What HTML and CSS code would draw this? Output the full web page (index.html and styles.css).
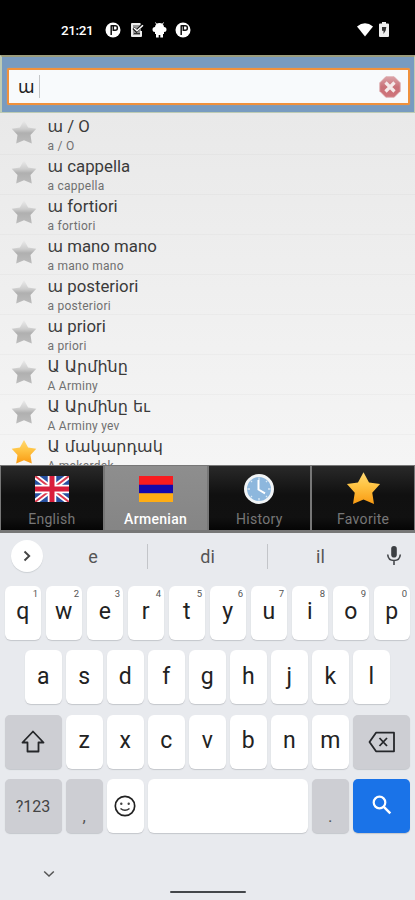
FILE: index.html
```html
<!DOCTYPE html>
<html lang="en">
<head>
<meta charset="utf-8">
<title>Dictionary</title>
<link rel="stylesheet" href="styles.css">
</head>
<body>
<svg class="defs" width="0" height="0" aria-hidden="true">
  <defs>
    <linearGradient id="silver" x1="0" y1="0" x2="0" y2="1"><stop offset="0" stop-color="#ececec"/><stop offset=".38" stop-color="#cdcdcd"/><stop offset=".55" stop-color="#b0b0b0"/><stop offset="1" stop-color="#bcbcbc"/></linearGradient>
    <linearGradient id="gold" x1="0" y1="0" x2="0" y2="1"><stop offset="0" stop-color="#ffd873"/><stop offset=".4" stop-color="#ffc545"/><stop offset="1" stop-color="#f99a12"/></linearGradient>
    <linearGradient id="clear" x1="0" y1="0" x2="0" y2="1"><stop offset="0" stop-color="#dba3a8"/><stop offset=".5" stop-color="#c97178"/><stop offset="1" stop-color="#cf747b"/></linearGradient>
    <symbol id="star" viewBox="0 0 26 26"><path d="M13 1l4.100 7.500 8.200 1.200-5.800 6.400 1.300 8.500L13 21.200l-7.800 3.400 1.300-8.500L.7 9.700l8.200-1.200z"/></symbol>
    <symbol id="pnote" viewBox="0 0 16 16"><circle cx="8" cy="8" r="7.500" fill="#fff"/><path d="M6.200 3.300V13M8.300 3.500v5.500M6.200 3.700h4q2.200 0 2.200 2.200T10.200 8.200H8.300" fill="none" stroke="#111" stroke-width="1.500"/></symbol>
  </defs>
</svg>
<div class="screen">
  <header class="status">
    <span class="time">21:21</span>
    <svg class="s1" width="16" height="16"><use href="#pnote"/></svg>
    <svg class="s2" width="14" height="16" viewBox="0 0 14 16"><path d="M10.500 2H2v12h9V9" fill="#999" stroke="#eee" stroke-width="2" stroke-linejoin="round"/><path d="M3.500 6l3 3L12.500 3" fill="none" stroke="#111" stroke-width="3"/><path d="M4 6l3 2.700L13 3.200" fill="none" stroke="#fff" stroke-width="1.500"/><path d="M4 11.500h6" stroke="#333"/></svg>
    <svg class="s3" width="15" height="16" viewBox="0 0 15 16"><path d="M4.500 2L3.500.500M10.500 2l1-1.500" stroke="#fff"/><path d="M3 5q.5-4 4.500-4T12 5q2.500 0 2.500 2.500T12 10v2h-1v3.500H8.300V13H6.700v2.500H4V12H3v-2Q.5 10 .5 7.500T3 5z" fill="#fff"/></svg>
    <svg class="s4" width="16" height="16"><use href="#pnote"/></svg>
    <svg class="wifi" width="16" height="14" viewBox="0 0 16 14"><path d="M0 3.500Q8-2.800 16 3.500L8 13.500z" fill="#fff"/></svg>
    <svg class="battery" width="10" height="15" viewBox="0 0 10 15"><path d="M3 0h4v1.500h2q1 0 1 1V14q0 1-1 1H1q-1 0-1-1V2.500q0-1 1-1h2z" fill="#eee"/><path d="M3 5h4.300l-.6 3.500L4.500 12V8.700H3z" fill="#333"/></svg>
  </header>

  <div class="searchbar">
    <div class="field">
      <span class="query arm">ա</span><i class="caret"></i>
      <svg class="clear" width="22" height="22" viewBox="0 0 22 22"><path d="M6.800.8h8.400l6 6v8.400l-6 6H6.800l-6-6V6.800z" fill="url(#clear)" stroke="#d9a2a6" stroke-width=".8"/><path d="M6.500 6.500l9 9m0-9l-9 9" stroke="#f5eaea" stroke-width="3.200"/></svg>
    </div>
  </div>

  <main class="list">
    <div class="row"><svg class="star"><use href="#star"/></svg><div><p class="word"><span class="arm">ա</span> / O</p><p class="sub">a / O</p></div></div>
    <div class="row"><svg class="star"><use href="#star"/></svg><div><p class="word"><span class="arm">ա</span> cappella</p><p class="sub">a cappella</p></div></div>
    <div class="row"><svg class="star"><use href="#star"/></svg><div><p class="word"><span class="arm">ա</span> fortiori</p><p class="sub">a fortiori</p></div></div>
    <div class="row"><svg class="star"><use href="#star"/></svg><div><p class="word"><span class="arm">ա</span> mano mano</p><p class="sub">a mano mano</p></div></div>
    <div class="row"><svg class="star"><use href="#star"/></svg><div><p class="word"><span class="arm">ա</span> posteriori</p><p class="sub">a posteriori</p></div></div>
    <div class="row"><svg class="star"><use href="#star"/></svg><div><p class="word"><span class="arm">ա</span> priori</p><p class="sub">a priori</p></div></div>
    <div class="row"><svg class="star"><use href="#star"/></svg><div><p class="word"><span class="arm">Ա Արմինը</span></p><p class="sub">A Arminy</p></div></div>
    <div class="row"><svg class="star"><use href="#star"/></svg><div><p class="word"><span class="arm">Ա Արմինը եւ</span></p><p class="sub">A Arminy yev</p></div></div>
    <div class="row"><svg class="star gold"><use href="#star"/></svg><div><p class="word"><span class="arm">Ա մակարդակ</span></p><p class="sub">A makardak</p></div></div>
  </main>

  <nav class="tabs">
    <div class="tab">
      <svg width="34" height="26" viewBox="0 0 34 26"><path fill="#2750a0" d="M0 0h34v26H0z"/><path d="M0 0l34 26M34 0L0 26" stroke="#fff" stroke-width="5.500"/><path d="M0 0l34 26M34 0L0 26" stroke="#dd3b50" stroke-width="2"/><path d="M17 0v26M0 13h34" stroke="#fff" stroke-width="8.500"/><path d="M17 0v26M0 13h34" stroke="#d91e3c" stroke-width="5"/></svg>
      <span>English</span>
    </div>
    <div class="tab on">
      <svg width="34" height="26" viewBox="0 0 34 26"><path fill="#f91c20" d="M0 0h34v9H0z"/><path fill="#1408ad" d="M0 8.700h34v9H0z"/><path fill="#ffad14" d="M0 17.300h34V26H0z"/></svg>
      <span>Armenian</span>
    </div>
    <div class="tab">
      <svg width="32" height="32" viewBox="0 0 32 32"><circle cx="16" cy="16" r="13.500" fill="#8db7dd" stroke="#f1f4f6" stroke-width="3"/><path d="M16 4.500v2.500M16 25v2.500M4.500 16H7M25 16h2.500M8 8l1 1M23 9l1-1M8 24l1-1M23 23l1 1" stroke="#d9e8f4" stroke-width="1.300"/><path d="M15.500 7v9.500l6.500 3.800" fill="none" stroke="#fff" stroke-width="2"/></svg>
      <span>History</span>
    </div>
    <div class="tab">
      <svg class="gold" width="35" height="35"><use href="#star"/></svg>
      <span>Favorite</span>
    </div>
  </nav>

  <section class="keyboard">
    <div class="suggest">
      <div class="expand"><svg width="10" height="14" viewBox="0 0 10 14"><path d="M2.500 2.500L7.200 7l-4.700 4.500" fill="none" stroke="#444" stroke-width="1.900"/></svg></div>
      <span class="s">e</span><span class="s">di</span><span class="s">il</span>
      <div class="mic"><svg width="16" height="22" viewBox="0 0 16 22"><rect x="5.200" y="1" width="5.600" height="11.500" rx="2.800" fill="#3c3f43"/><path d="M1.700 9.500q.4 6 6.300 6t6.300-6M8 15.500V20" fill="none" stroke="#45484c" stroke-width="1.600"/></svg></div>
    </div>
    <div class="keys">
      <div class="krow"><b class="key">q<sup>1</sup></b><b class="key">w<sup>2</sup></b><b class="key">e<sup>3</sup></b><b class="key">r<sup>4</sup></b><b class="key">t<sup>5</sup></b><b class="key">y<sup>6</sup></b><b class="key">u<sup>7</sup></b><b class="key">i<sup>8</sup></b><b class="key">o<sup>9</sup></b><b class="key">p<sup>0</sup></b></div>
      <div class="krow"><b class="key">a</b><b class="key">s</b><b class="key">d</b><b class="key">f</b><b class="key">g</b><b class="key">h</b><b class="key">j</b><b class="key">k</b><b class="key">l</b></div>
      <div class="krow">
        <b class="key wide"><svg width="24" height="24" viewBox="0 0 24 24"><path d="M12 1.500L1.500 12.500H6.500V21.500H17.500V12.500H22.500z" fill="none" stroke="#25272a" stroke-width="1.800" stroke-linejoin="round"/></svg></b>
        <b class="key">z</b><b class="key">x</b><b class="key">c</b><b class="key">v</b><b class="key">b</b><b class="key">n</b><b class="key">m</b>
        <b class="key wide"><svg width="28" height="22" viewBox="0 0 28 22"><path d="M8 1.700H26V20.300H8L1.500 11z" fill="none" stroke="#25272a" stroke-width="1.800" stroke-linejoin="round"/><path d="M11.500 7l7.500 8m0-8l-7.500 8" stroke="#25272a" stroke-width="1.800"/></svg></b>
      </div>
      <div class="krow">
        <b class="key wide num">?123</b>
        <b class="key grey punct">,</b>
        <b class="key emoji"><svg width="22" height="22" viewBox="0 0 22 22"><circle cx="11" cy="11" r="9.700" fill="none" stroke="#222" stroke-width="1.700"/><circle cx="7.300" cy="8.800" r="1.200" fill="#444"/><circle cx="14.700" cy="8.800" r="1.200" fill="#444"/><path d="M6.500 13.500q4.500 3.600 9 0" fill="none" stroke="#333" stroke-width="1.600"/></svg></b>
        <b class="key space"></b>
        <b class="key grey punct">.</b>
        <b class="key wide go"><svg width="20" height="20" viewBox="0 0 20 20"><circle cx="7.500" cy="7.500" r="5.800" fill="none" stroke="#fff" stroke-width="2.200"/><path d="M11.800 11.800l6.500 6.500" stroke="#fff" stroke-width="2.500"/></svg></b>
      </div>
    </div>
    <footer class="navbar">
      <svg class="down" width="12" height="8" viewBox="0 0 12 8"><path d="M1.200 1.500L6 6l4.800-4.500" fill="none" stroke="#555" stroke-width="1.500"/></svg>
      <i class="pill"></i>
    </footer>
  </section>
</div>
</body>
</html>
```
FILE: styles.css
```css
* { box-sizing: border-box; }
body { margin: 0; font-family: Roboto, "DejaVu Sans", sans-serif; background: #e8eaee; }
p { margin: 0; }
svg { display: block; flex: none; }
.defs { position: absolute; }
.screen { width: 415px; height: 900px; display: flex; flex-direction: column; overflow: hidden; }
.arm { font-family: "DejaVu Sans", sans-serif; }

.status { height: 55px; flex: none; background: #000; display: flex; align-items: center; padding: 4px 26px 0 61px; color: #fff; }
.time { width: 44px; font-size: 13.500px; font-weight: 500; letter-spacing: -.4px; padding-top: 1px; }
.s2 { margin-left: 9px; }
.s3 { margin-left: 8px; }
.s4 { margin-left: 8px; }
.wifi { margin-left: auto; }
.battery { margin-left: 6px; }

.searchbar { height: 58px; flex: none; background: #789bc0; border: 2px solid #bdcbb4; border-top-color: #9b9c7c; border-right-width: 1px; border-bottom-width: 1px; padding: 11px 4px 7px 5px; }
.field { height: 37px; border: 2px solid #f0913c; border-radius: 2px; background: #f8fafc; display: flex; align-items: center; padding: 0 7px 0 9px; box-shadow: 0 0 1px #f0a050; }
.query { font-size: 17px; line-height: 20px; color: #222; width: 18px; }
.caret { width: 1px; height: 23px; background: #c4c6c8; margin-left: 3px; }
.clear { margin-left: auto; }

.list { height: 352px; flex: none; overflow: hidden; background: linear-gradient(#e9e9e9, #f5f5f5); padding-top: 2px; }
.row { height: 40px; display: flex; border-bottom: 1px solid rgba(0, 0, 0, .025); padding: 2px 0 0 11px; }
.star { width: 26px; height: 26px; margin: 2px 10.500px 0 0; fill: url(#silver); }
.gold { fill: url(#gold); }
.word { font-size: 16.800px; line-height: 19px; color: #3a3a3a; white-space: nowrap; }
.word .arm { font-size: 16px; }
.sub { font-size: 12px; letter-spacing: .25px; line-height: 17px; margin-top: 2px; color: #707070; white-space: nowrap; }

.tabs { height: 68px; flex: none; display: grid; grid-template-columns: repeat(4, 1fr); gap: 2px; padding: 1px 1px 3px; background: #777; }
.tab { background: linear-gradient(#292929, #101010 45%, #111 80%, #050505); display: grid; grid-template-rows: 43px 18px; align-content: start; justify-items: center; align-items: center; padding-top: 1px; color: #777; font-size: 14px; letter-spacing: .3px; }
.tab.on { background: linear-gradient(#8e8e8e, #858585); color: #fff; font-weight: 500; }

.keyboard { flex: 1; background: #e8eaee; color: #222; }
.suggest { height: 52.500px; display: grid; grid-template-columns: 39px 108px 120px 106px 42px; align-items: center; padding-bottom: 6px; }
.expand { width: 32px; height: 32px; border-radius: 50%; background: #fff; margin-left: 11px; display: flex; align-items: center; justify-content: center; box-shadow: 0 1px 1px #ccd0d4; }
.s { font-size: 18px; color: #555; text-align: center; height: 25px; line-height: 25px; }
.s + .s { border-left: 1px solid #c3c5c9; }
.mic { display: flex; justify-content: center; }
.keys { display: flex; flex-direction: column; gap: 10.500px; padding: 0 5px 0 4.500px; }
.krow { display: flex; justify-content: center; gap: 4.500px; height: 54px; }
.key { position: relative; width: 36.500px; flex: none; border-radius: 6px; background: #fff; box-shadow: 0 1px 1px #c4c7cb; display: flex; align-items: center; justify-content: center; font-weight: 400; font-size: 23px; padding-bottom: 2px; }
.key sup { position: absolute; top: 2px; right: 3px; font-size: 9.500px; line-height: 12px; color: #555; }
.wide { width: 57px; background: #cdced3; padding-bottom: 0; border-radius: 5px; }
.grey { background: #cdced3; border-radius: 5px; }
.num { font-size: 16px; color: #444; }
.emoji { padding: 0 1px 1px 0; }
.punct { font-size: 17px; padding-top: 20px; padding-bottom: 0; color: #555; }
.space { flex: 1; }
.go { background: #1a73e8; padding-bottom: 2px; }
.navbar { height: 67px; display: grid; grid-template-columns: 170px 76px; align-items: end; }
.down { margin: 0 0 22px 43px; }
.pill { height: 2px; border-radius: 1px; background: #44474a; margin-bottom: 7px; }
```
